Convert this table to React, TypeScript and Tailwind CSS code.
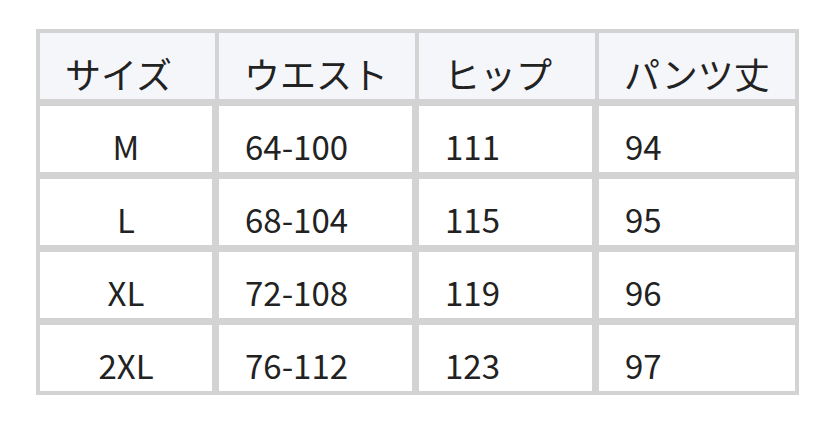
const header = ["サイズ", "ウエスト", "ヒップ", "パンツ丈"];

const rows = [
  ["M", "64-100", "111", "94"],
  ["L", "68-104", "115", "95"],
  ["XL", "72-108", "119", "96"],
  ["2XL", "76-112", "123", "97"],
];

const widths = ["w-[175px]", "w-[196px]", "w-[176px]", "w-[196px]"];

const App = () => {
  return (
    <div
      className="w-[834px] h-[422px] bg-white pt-[29px] pl-[36px] text-[#222222]"
      style={{ fontFamily: '"Noto Sans CJK JP", "Noto Sans", sans-serif' }}
    >
      <div className="w-[763px] border-[4px] border-[#d3d3d3] bg-[#d3d3d3] flex flex-col gap-[7px]">
        {/* Header */}
        <div className="flex gap-[4px]">
          {header.map((h, i) => (
            <div
              key={h}
              className={`${widths[i]} h-[66px] bg-[#f5f6fa] flex items-end pb-[3px] pl-[25px] text-[36px]`}
            >
              <span className="leading-[46px]">{h}</span>
            </div>
          ))}
        </div>
        {/* Body */}
        {rows.map((r) => (
          <div key={r[0]} className="flex gap-[4px]">
            {r.map((c, i) => (
              <div
                key={i}
                className={`${widths[i]} h-[66px] flex ${i < 3 ? "border-r-[3px] border-[#d3d3d3]" : ""}`}
              >
                <div
                  className={`flex-1 bg-white flex items-end pb-[4px] text-[33px] ${
                    i === 0 ? "justify-center" : "pl-[26px]"
                  }`}
                >
                  <span className="leading-[44px]">{c}</span>
                </div>
              </div>
            ))}
          </div>
        ))}
      </div>
    </div>
  );
};

export default App;
